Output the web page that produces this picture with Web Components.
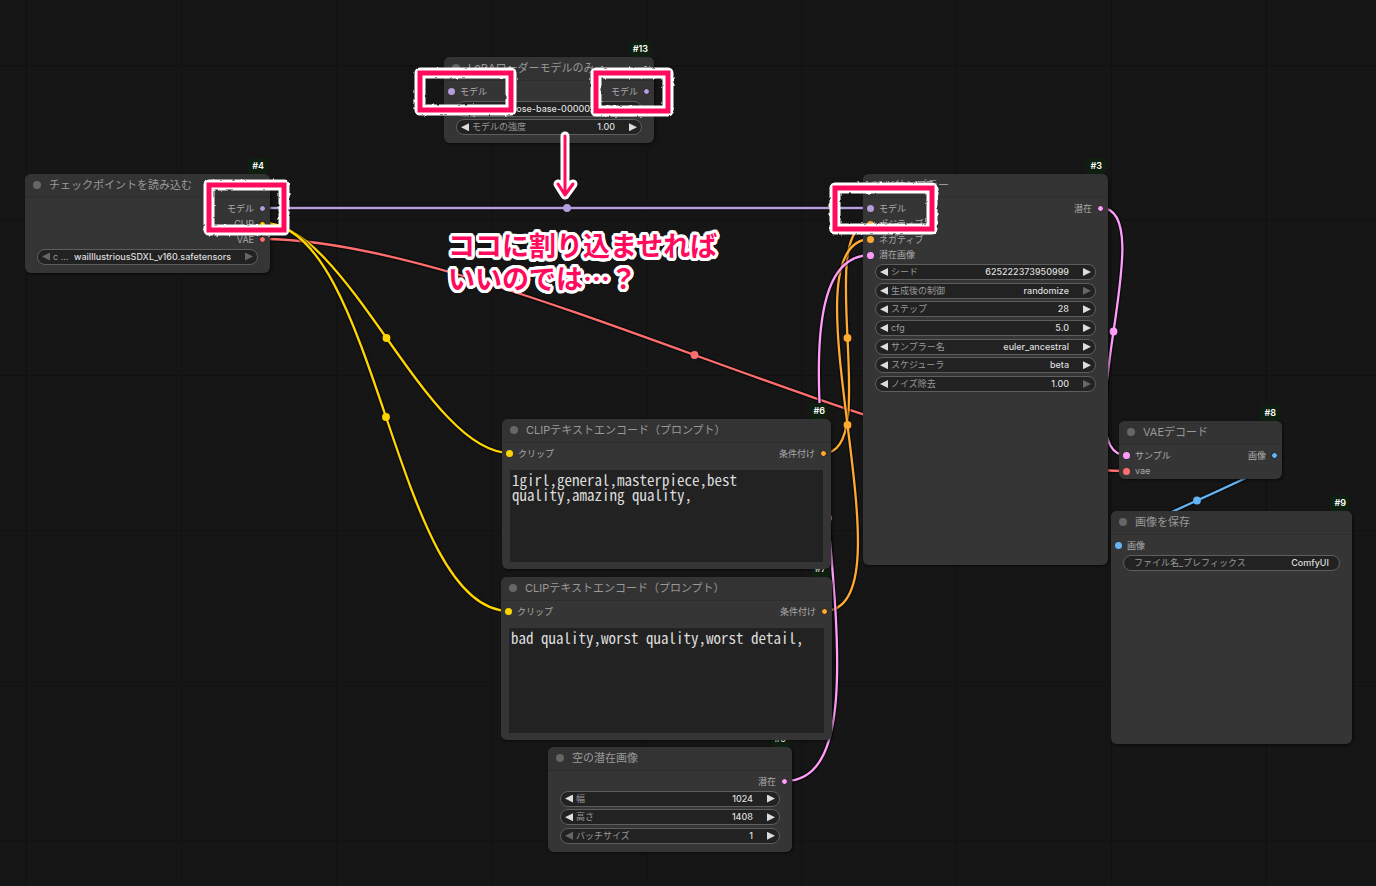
<!DOCTYPE html>
<html lang="ja">
<head>
<meta charset="utf-8">
<title>ComfyUI</title>
<style>
  body { margin: 0; background: #151515; font-family: Inter, "Noto Sans CJK JP", sans-serif; }
</style>
</head>
<body>

<node-graph>
  <graph-node node-id="5" label="空の潜在画像" style="--x: 548px; --y: 747px; --w: 244px">
    <graph-port slot="out" type="latent" side="out">潜在</graph-port>
    <graph-widget slot="widgets" label="幅" value="1024"></graph-widget>
    <graph-widget slot="widgets" label="高さ" value="1408"></graph-widget>
    <graph-widget slot="widgets" label="バッチサイズ" value="1" at-min></graph-widget>
  </graph-node>

  <graph-node node-id="7" label="CLIPテキストエンコード（プロンプト）" style="--x: 501px; --y: 577px; --w: 331px; --end: 7px">
    <graph-port slot="in" type="clip">クリップ</graph-port>
    <graph-port slot="out" type="cond" side="out">条件付け</graph-port>
    <prompt-box style="--rows-height: 105px" value="bad quality,worst quality,worst detail,"></prompt-box>
  </graph-node>

  <graph-node node-id="6" label="CLIPテキストエンコード（プロンプト）" style="--x: 502px; --y: 419px; --w: 329px; --end: 7px">
    <graph-port slot="in" type="clip">クリップ</graph-port>
    <graph-port slot="out" type="cond" side="out">条件付け</graph-port>
    <prompt-box style="--rows-height: 92px" value="1girl,general,masterpiece,best quality,amazing quality,"></prompt-box>
  </graph-node>

  <graph-node node-id="4" label="チェックポイントを読み込む" style="--x: 25px; --y: 174px; --w: 245px">
    <graph-port slot="out" type="model" side="out">モデル</graph-port>
    <graph-port slot="out" type="clip" side="out">CLIP</graph-port>
    <graph-port slot="out" type="vae" side="out">VAE</graph-port>
    <graph-widget slot="widgets" label="c ..." value="waiIllustriousSDXL_v160.safetensors" options at-min at-max></graph-widget>
  </graph-node>

  <graph-node node-id="13" label="LoRAローダーモデルのみ" style="--x: 444px; --y: 57px; --w: 210px">
    <graph-port slot="in" type="model">モデル</graph-port>
    <graph-port slot="out" type="model" side="out">モデル</graph-port>
    <graph-widget slot="widgets" label="L ..." value="openpose-base-000001.safe" options></graph-widget>
    <graph-widget slot="widgets" label="モデルの強度" value="1.00"></graph-widget>
  </graph-node>

  <graph-node node-id="3" label="Kサンプラー" style="--x: 863px; --y: 174px; --w: 245px; --h: 391px">
    <graph-port slot="in" type="model">モデル</graph-port>
    <graph-port slot="in" type="cond">ポジティブ</graph-port>
    <graph-port slot="in" type="cond">ネガティブ</graph-port>
    <graph-port slot="in" type="latent">潜在画像</graph-port>
    <graph-port slot="out" type="latent" side="out">潜在</graph-port>
    <graph-widget slot="widgets" label="シード" value="625222373950999"></graph-widget>
    <graph-widget slot="widgets" label="生成後の制御" value="randomize" options at-max></graph-widget>
    <graph-widget slot="widgets" label="ステップ" value="28"></graph-widget>
    <graph-widget slot="widgets" label="cfg" value="5.0"></graph-widget>
    <graph-widget slot="widgets" label="サンプラー名" value="euler_ancestral" options></graph-widget>
    <graph-widget slot="widgets" label="スケジューラ" value="beta" options></graph-widget>
    <graph-widget slot="widgets" label="ノイズ除去" value="1.00" at-max></graph-widget>
  </graph-node>

  <graph-node node-id="8" label="VAEデコード" style="--x: 1119px; --y: 421px; --w: 163px; --end: 0px">
    <graph-port slot="in" type="latent">サンプル</graph-port>
    <graph-port slot="in" type="vae">vae</graph-port>
    <graph-port slot="out" type="image" side="out">画像</graph-port>
  </graph-node>

  <graph-node node-id="9" label="画像を保存" style="--x: 1111px; --y: 511px; --w: 241px; --h: 233px">
    <graph-port slot="in" type="image">画像</graph-port>
    <graph-widget slot="widgets" label="ファイル名_プレフィックス" value="ComfyUI" plain></graph-widget>
  </graph-node>

  <graph-notes slot="notes">ココに割り込ませれば<br>いいのでは…？</graph-notes>
</node-graph>

<script>
(function() {

  const COLORS = {
    model: '#b39ddb',
    clip: '#ffd500',
    vae: '#ff6e6e',
    cond: '#ffa931',
    latent: '#ff9cf9',
    image: '#64b5f6'
  };

  // type, x1, y1, x2, y2
  const LINKS = [
    ['image', 1275, 455, 1119, 546],
    ['vae', 263, 239, 1126, 471],
    ['clip', 263, 223, 510, 453],
    ['clip', 263, 223, 509, 611],
    ['cond', 824, 453, 871, 223],
    ['cond', 824, 611, 871, 239],
    ['latent', 785, 781, 871, 255],
    ['latent', 1101, 208, 1126, 455],
    ['model', 263, 208, 871, 208]
  ];

  // pink frames: x, y, width, height
  const FRAMES = [
    [420, 73, 91, 37],
    [596, 73, 72, 38],
    [209, 185, 75, 45],
    [835, 188, 97, 41]
  ];

  let uid = 0;

  function linkMarkup([type, x1, y1, x2, y2]) {
    const reach = Math.hypot(x2 - x1, y2 - y1) / 4;
    const d = `M${x1} ${y1}C${x1 + reach} ${y1} ${x2 - reach} ${y2} ${x2} ${y2}`;
    return `
      <path d="${d}" stroke="#000" stroke-opacity=".5" stroke-width="5"/>
      <path d="${d}" stroke="${COLORS[type]}" stroke-width="2.3"/>
      <circle cx="${(x1 + x2) / 2}" cy="${(y1 + y2) / 2}" r="3.9" fill="${COLORS[type]}"/>`;
  }

  // round outline: one hard shadow per direction
  function outline(radius, color) {
    const shadows = [];
    for (let i = 0; i < 24; i++) {
      const a = i * Math.PI / 12;
      shadows.push(`${(radius * Math.cos(a)).toFixed(2)}px ${(radius * Math.sin(a)).toFixed(2)}px 0 ${color}`);
    }
    return shadows.join(', ');
  }

  class NodeGraph extends HTMLElement {
    constructor() {
      super();
      this.attachShadow({mode: 'open'});
      this.shadowRoot.innerHTML = `
        <style>
          :host {
            display: block; position: relative; overflow: hidden; min-height: 100vh;
            background-color: #161616;
            background-image:
              linear-gradient(90deg, #111 1px, transparent 1px),
              linear-gradient(#111 1px, transparent 1px),
              linear-gradient(90deg, #141414 1px, transparent 1px),
              linear-gradient(#141414 1px, transparent 1px);
            background-size: 155px 155px, 155px 155px, 8px 8px, 8px 8px;
            background-position: 26px 65px, 26px 65px, 1px 2px, 1px 2px;
          }
          svg { position: absolute; inset: 0; width: 100%; height: 100%; }
        </style>
        <svg fill="none" aria-hidden="true">${LINKS.map(linkMarkup).join('')}</svg>
        <slot></slot>
        <slot name="notes"></slot>
      `;
    }
  }

  class GraphNode extends HTMLElement {
    connectedCallback() {
      this.attachShadow({mode: 'open'});
      const count = (name) => this.querySelectorAll(`[slot="${name}"]`).length;
      const rows = Math.max(count('in'), count('out'));
      const widgets = count('widgets');
      this.shadowRoot.innerHTML = `
        <style>
          :host {
            position: absolute; left: var(--x); top: var(--y); width: var(--w);
            min-height: var(--h, 0); box-sizing: border-box; padding-bottom: var(--end, 8px);
            background: #353535; border-radius: 6px; box-shadow: 1px 1px 3px rgba(0, 0, 0, .6);
          }
          header {
            display: flex; align-items: center; gap: 8px; box-sizing: border-box; height: 24px;
            padding: 0 0 1px 8px; border-bottom: 1px solid #2e2e2e; border-radius: 6px 6px 0 0;
            background: #333; color: #999;
          }
          header i { width: 8px; height: 8px; border-radius: 50%; background: #666; }
          h2 { margin: 0; font-size: 11px; line-height: 16px; font-weight: 400; white-space: nowrap; }
          .badge {
            position: absolute; right: 2px; bottom: 100%; padding: 0 4px; border-radius: 4px;
            background: #0f1f0f; color: #fff; font-size: 9px; line-height: 16px; font-weight: 600;
          }
          .ports {
            display: flex; justify-content: space-between; margin-top: 3px;
            height: calc(${rows} * 31px / 2);
          }
          .col { display: grid; grid-auto-rows: 1fr; }
          .in { height: calc(${count('in')} * 31px / 2); }
          .out { height: calc(${count('out')} * 31px / 2); }
          .widgets {
            display: grid; grid-auto-rows: 16px; align-content: space-between;
            height: calc(16px + ${widgets - 1} * 56px / 3); margin: 1px 12px 0;
          }
        </style>
        <span class="badge">#${this.getAttribute('node-id')}</span>
        <header><i></i><h2>${this.getAttribute('label')}</h2></header>
        <div class="ports">
          <div class="col in"><slot name="in"></slot></div>
          <div class="col out"><slot name="out"></slot></div>
        </div>
        ${widgets ? '<div class="widgets"><slot name="widgets"></slot></div>' : ''}
        <slot></slot>
      `;
    }
  }

  class GraphPort extends HTMLElement {
    connectedCallback() {
      this.attachShadow({mode: 'open'});
      this.shadowRoot.innerHTML = `
        <style>
          :host {
            display: flex; align-items: center; gap: 5px; padding: 0 4px;
            color: #aaa; font-size: 9px; line-height: 12px; white-space: nowrap;
          }
          :host([side="out"]) { flex-direction: row-reverse; }
          i { width: 7px; height: 7px; border-radius: 50%; background: ${COLORS[this.getAttribute('type')]}; }
          :host([side="out"]) i { width: 5px; height: 5px; border: 1px solid #1b1b1b; }
        </style>
        <i></i><slot></slot>
      `;
    }
  }

  class GraphWidget extends HTMLElement {
    connectedCallback() {
      this.attachShadow({mode: 'open'});
      const id = 'widget-' + (++uid);
      const label = this.getAttribute('label');
      const value = this.getAttribute('value');
      const plain = this.hasAttribute('plain');
      const field = this.hasAttribute('options')
        ? `<select id="${id}"><option>${value}</option></select>`
        : `<input id="${id}" type="text" value="${value}">`;
      const arrow = (name, text, off) => plain ? '' :
        `<button class="${name}" aria-label="${label} ${text}" ${off ? 'disabled' : ''}></button>`;
      this.shadowRoot.innerHTML = `
        <style>
          :host {
            display: flex; align-items: center; box-sizing: border-box; height: 16px; padding: 0 4px;
            background: #222; border: 1px solid #5e5e5e; border-radius: 8px; overflow: hidden;
            font-size: 9px; line-height: 14px;
          }
          :host([plain]) { padding: 0 10px; }
          label { color: #999; white-space: nowrap; }
          input, select {
            flex: 1; min-width: 0; box-sizing: border-box; width: 0; height: 14px; margin: 0; padding: 0; border: 0;
            appearance: none; background: none; color: #ddd; outline: none;
            font: inherit; font-weight: 500; text-align: right; text-align-last: right;
          }
          button {
            flex: none; width: 8px; height: 8px; padding: 0; border: 0; background: #ddd;
          }
          button:disabled { background: #666; }
          .prev { clip-path: polygon(0 50%, 100% 0, 100% 100%); margin-right: 3px; }
          .next { clip-path: polygon(100% 50%, 0 0, 0 100%); margin-left: 14px; }
        </style>
        ${arrow('prev', '-', this.hasAttribute('at-min'))}
        <label for="${id}">${label}</label>
        ${field}
        ${arrow('next', '+', this.hasAttribute('at-max'))}
      `;
    }
  }

  class PromptBox extends HTMLElement {
    connectedCallback() {
      this.attachShadow({mode: 'open'});
      this.shadowRoot.innerHTML = `
        <style>
          :host { display: block; margin: 8px 8px 0; }
          textarea {
            display: block; box-sizing: border-box; width: 100%; height: var(--rows-height);
            padding: 2px; border: 0; resize: none; outline: none; background: #222; color: #ddd;
            font: 15px/15px "Noto Sans Mono CJK JP", "Liberation Mono", monospace;
          }
        </style>
        <textarea aria-label="プロンプト" spellcheck="false">${this.getAttribute('value')}</textarea>
      `;
    }
  }

  // hand drawn frames, arrow and comment on top of the graph
  class GraphNotes extends HTMLElement {
    constructor() {
      super();
      this.attachShadow({mode: 'open'});
      const rects = FRAMES.map(([x, y, w, h]) => `<rect x="${x}" y="${y}" width="${w}" height="${h}"/>`).join('');
      const arrow = '<path d="M565 136V195M558 184L565 195L573 184"/>';
      this.shadowRoot.innerHTML = `
        <style>
          :host { position: absolute; inset: 0; pointer-events: none; }
          svg { position: absolute; inset: 0; width: 100%; height: 100%; }
          p {
            position: absolute; left: 448px; top: 228px; margin: 0;
            color: #ff0a5c; font: 700 27px/33px "Noto Sans CJK JP", sans-serif; white-space: nowrap;
            text-shadow: ${outline(3, '#fff')};
          }
        </style>
        <svg fill="none" aria-hidden="true">
          <filter id="rough" x="-5%" y="-5%" width="110%" height="110%" color-interpolation-filters="sRGB">
            <feTurbulence type="fractalNoise" baseFrequency=".25" numOctaves="1" seed="4"/>
            <feComponentTransfer><feFuncA type="linear" slope="0" intercept="1"/></feComponentTransfer>
            <feDisplacementMap in="SourceGraphic" scale="3" xChannelSelector="R" yChannelSelector="G" result="edge"/>
            <feGaussianBlur stdDeviation=".4"/>
          </filter>
          <g stroke="#fff" stroke-width="11" stroke-linejoin="round" filter="url(#rough)">${rects}</g>
          <g stroke="#ff0a5c" stroke-width="5">${rects}</g>
          <g stroke-linecap="round" stroke-linejoin="round">
            <g stroke="#fff" stroke-width="9">${arrow}</g>
            <g stroke="#ff0a5c" stroke-width="3">${arrow}</g>
          </g>
        </svg>
        <p><slot></slot></p>
      `;
    }
  }

  window.customElements.define('graph-port', GraphPort);
  window.customElements.define('graph-widget', GraphWidget);
  window.customElements.define('prompt-box', PromptBox);
  window.customElements.define('graph-node', GraphNode);
  window.customElements.define('graph-notes', GraphNotes);
  window.customElements.define('node-graph', NodeGraph);
})();
</script>
</body>
</html>
